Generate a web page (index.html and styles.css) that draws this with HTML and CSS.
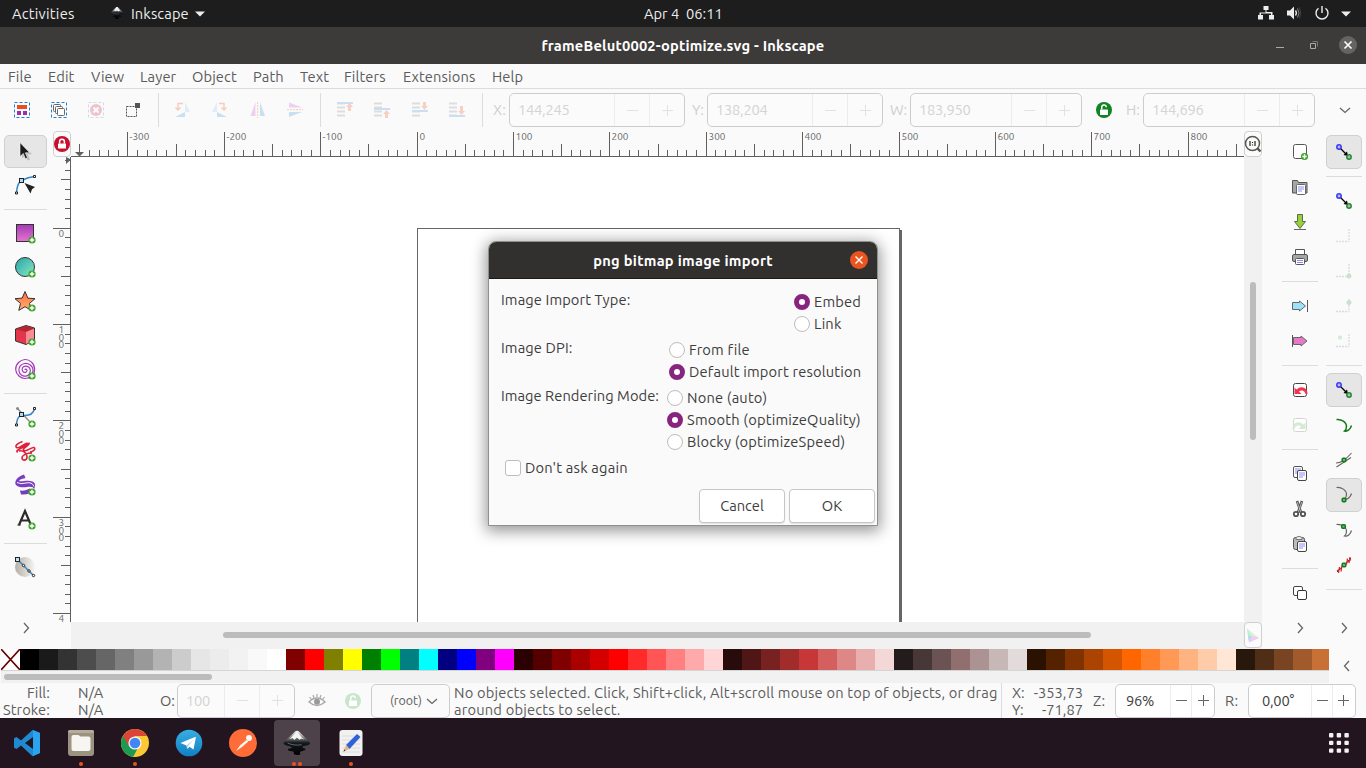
FILE: index.html
```html
<!DOCTYPE html>
<html lang="en">
<head>
<meta charset="utf-8">
<title>frameBelut0002-optimize.svg - Inkscape</title>
<link rel="stylesheet" href="styles.css">
</head>
<body>
<svg class="defs" aria-hidden="true">
  <defs>
    <linearGradient id="gPurple" x2="0" y2="1"><stop offset="0" stop-color="#a33bb4"/><stop offset="1" stop-color="#e573cf"/></linearGradient>
    <linearGradient id="gTeal" x2="1" y2="1"><stop offset="0" stop-color="#27a3a8"/><stop offset="1" stop-color="#8ce8c4"/></linearGradient>
    <linearGradient id="gOrange" x2="0" y2="1"><stop offset="0" stop-color="#ff6d3f"/><stop offset="1" stop-color="#ffb070"/></linearGradient>
    <linearGradient id="gGray" x2="1" y2="0"><stop offset="0" stop-color="#b5b0a6"/><stop offset="1" stop-color="#f6f5f3"/></linearGradient>
    <linearGradient id="gTele" x2="0" y2="1"><stop offset="0" stop-color="#37aee2"/><stop offset="1" stop-color="#1280c4"/></linearGradient>
    <linearGradient id="gInk" x2="0" y2="1"><stop offset="0" stop-color="#fff"/><stop offset=".3" stop-color="#777"/><stop offset=".5" stop-color="#15181c"/><stop offset="1" stop-color="#000"/></linearGradient>
    <g id="plus"><circle cx="17" cy="17" r="3.600" fill="#3fa52a"/><path d="M17 14.800v4.400M14.800 17h4.400" stroke="#fff" stroke-width="1.400"/></g>
    <g id="snap"><path d="M8 8l6 6" stroke="#000" stroke-width="1.200"/><path d="M16 16l-4.500-1 3.500-3.500z" fill="#000"/><circle cx="7" cy="7" r="2.200" fill="#b9b9f8" stroke="#3a3af0" stroke-width="1.500"/><circle cx="17" cy="17" r="2.200" fill="#9cc8a5" stroke="#2a8438" stroke-width="1.500"/></g>
    <g id="dot"><rect x="-1.800" y="-1.800" width="3.600" height="3.600" rx="1" fill="#6fb46f" stroke="#147a1c" stroke-width="1.500"/></g>
    <g id="corner"><path d="M17 5v12.500M4 17.500h13" stroke-dasharray="2 1" stroke-width="1.400" fill="none"/></g>
    <g id="ink"><path d="M12 1.500c-1.500 0-2 1-3 2L1.500 10.500c-2.200 2.300-.5 3.500 3 4 2 .4 3.500.8 3 1.600-.6.8-3.500.5-3.300 1.600.2 1 3.300 1.200 4.800 1.800 1 .5-.6 1.400.6 2.200 1.500 1 4.800.9 5.200-.3.3-1-.8-1.300 0-2 1.200-.7 4-.6 4.500-1.800.4-1.200-2.500-1.200-2.600-2.200 0-1 1.800-.8 3.800-1.300 2.600-.6 3.400-1.800 1.800-3.600L15 3.500c-1-1-1.500-2-3-2z" fill="url(#gInk)"/><path d="M12 2.300L8 6.300l-2.500 2.500 2.700-1.100 1.500 1.800 2.200-2.200 2.300 2 1.500-1.200 2.500.8L16 7z" fill="#f4f4f4"/><path d="M4 12q5 2.500 12 1.500" fill="none" stroke="#68788a" stroke-width=".7"/></g>
    <g id="lockOpen"><rect x="8" y="11.500" width="8" height="5.500" rx=".6" fill="#fff"/><path d="M9.700 11.500V9.500a2.300 2.300 0 014.600-.3" fill="none" stroke="#fff" stroke-width="1.500"/></g>
    <g id="lines"><path d="M4 5.500h8M4 9.500h8M4 13.500h8M4 17.500h8" stroke="#ddd" stroke-width="2"/></g>
  </defs>
</svg>

<header class="topbar">
  <span class="activities">Activities</span>
  <svg class="app-ico" viewBox="0 0 24 24"><use href="#ink"/></svg>
  <span class="app-name">Inkscape</span>
  <svg class="tri" viewBox="0 0 10 6"><path d="M0 .500h10L5 5.500z" fill="#eee"/></svg>
  <span class="clock">Apr 4&nbsp; 06:11</span>
  <div class="tray">
    <svg class="i16" viewBox="0 0 16 16"><path d="M5.500 1h5v4h-2v2h6V10H16v4.500h-5V10h2V8.500H3V10h2v4.500H0V10h1.500V7.500h6V5h-2z" fill="#eee"/></svg>
    <svg class="i16" viewBox="0 0 16 16"><path d="M1 5.500h3l4-4v13l-4-4H1z" fill="#eee"/><path d="M9.500 5.500q1.800 2.500 0 5" stroke="#eee" fill="none" stroke-width="1.300"/><path d="M11.500 3.500q3 4.500 0 9" stroke="#888" fill="none"/><path d="M13.300 2.300q3 5.700 0 11.400" stroke="#444" fill="none"/></svg>
    <svg class="i16" viewBox="0 0 16 16"><path d="M4.500 3.200a6 6 0 107 0M8 1v7" fill="none" stroke="#eee" stroke-width="1.400"/></svg>
    <svg class="tri" viewBox="0 0 10 6"><path d="M0 .500h10L5 5.500z" fill="#eee"/></svg>
  </div>
</header>

<div class="titlebar">
  <h1>frameBelut0002-optimize.svg - Inkscape</h1>
  <div class="winbtns">
    <svg viewBox="0 0 18 18"><path d="M5 11.500h8" stroke="#aaa"/></svg>
    <svg viewBox="0 0 18 18"><path d="M5.500 7.500h5v5h-5z" fill="none" stroke="#aaa"/><path d="M7.500 5.500h5v5" fill="none" stroke="#777"/></svg>
    <svg viewBox="0 0 18 18"><circle cx="9" cy="9" r="9" fill="#666462"/><path d="M5.500 5.500l7 7m0-7l-7 7" stroke="#fff" stroke-width="1.600"/></svg>
  </div>
</div>

<nav class="menubar"><span>File</span><span>Edit</span><span>View</span><span>Layer</span><span>Object</span><span>Path</span><span>Text</span><span>Filters</span><span>Extensions</span><span>Help</span></nav>

<div class="toolbar">
  <div class="tgroup g1">
    <svg class="i24" viewBox="0 0 24 24"><rect x="4.500" y="4.500" width="15" height="15" fill="none" stroke="#1d7fd6" stroke-dasharray="3 2"/><path d="M7 7h10v4H7z" fill="#e84f1c"/><path d="M7 13h4v4H7zM13 13h4v4h-4z" fill="#9c2fae"/></svg>
    <svg class="i24" viewBox="0 0 24 24"><rect x="4.500" y="4.500" width="15" height="15" fill="none" stroke="#1d7fd6" stroke-dasharray="3 2"/><g fill="#fff" stroke="#666"><rect x="6.500" y="6.500" width="7" height="7" rx="1"/><rect x="8.500" y="8.500" width="7" height="7" rx="1"/><rect x="10.500" y="10.500" width="7" height="7" rx="1"/></g></svg>
    <svg class="i24" viewBox="0 0 24 24"><rect x="4.500" y="4.500" width="15" height="15" fill="none" stroke="#c7dff2" stroke-dasharray="3 2"/><circle cx="12" cy="12" r="6" fill="#f0c3ca"/><path d="M9.500 9.500l5 5m0-5l-5 5" stroke="#fff" stroke-width="1.800"/></svg>
    <svg class="i24" viewBox="0 0 24 24"><rect x="5.500" y="8.500" width="10" height="10" fill="none" stroke="#555" stroke-dasharray="2 1"/><path d="M14 5h5v5h-5z" fill="#555"/></svg>
  </div>
  <div class="tgroup g2">
    <svg class="i24" viewBox="0 0 24 24"><path d="M14 4l5 10h-5z" fill="#deedf6"/><path d="M4 19l10-5v5z" fill="#c9dff2"/><path d="M12 5.500H7V12M4.500 9.500L7 12 9.500 9.500" fill="none" stroke="#f7cabf" stroke-width="1.400"/></svg>
    <svg class="i24" viewBox="0 0 24 24"><path d="M9 4L4 14h5z" fill="#deedf6"/><path d="M19 19L9 14v5z" fill="#c9dff2"/><path d="M11 5.500h5V12M13.500 9.500L16 12l2.500-2.500" fill="none" stroke="#f7cabf" stroke-width="1.400"/></svg>
    <svg class="i24" viewBox="0 0 24 24"><path d="M9.500 4v14h-5z" fill="#efcff0"/><path d="M14 4v14h5z" fill="#c9dff2"/><path d="M11.700 4v16" stroke="#f5c9be" stroke-dasharray="2 1"/></svg>
    <svg class="i24" viewBox="0 0 24 24"><path d="M6 9.500h13l-13-5z" fill="#efcff0"/><path d="M6 14v5l13-5z" fill="#c9dff2"/><path d="M4 11.700h16" stroke="#f5c9be" stroke-dasharray="2 1"/></svg>
  </div>
  <div class="tgroup g3">
    <svg class="i24" viewBox="0 0 24 24"><use href="#lines"/><path d="M4 5h16" stroke="#c9dff2" stroke-width="2"/><path d="M15 13V9h-2l3.500-4L20 9h-2v4z" fill="#f8cfc4"/></svg>
    <svg class="i24" viewBox="0 0 24 24"><use href="#lines"/><path d="M4 11h16" stroke="#c9dff2" stroke-width="2"/><path d="M15 20v-4h-2l3.500-4 3.500 4h-2v4z" fill="#f8cfc4"/></svg>
    <svg class="i24" viewBox="0 0 24 24"><use href="#lines"/><path d="M4 13h16" stroke="#c9dff2" stroke-width="2"/><path d="M15 4v4h-2l3.500 4L20 8h-2V4z" fill="#f8cfc4"/></svg>
    <svg class="i24" viewBox="0 0 24 24"><use href="#lines"/><path d="M4 18h16" stroke="#c9dff2" stroke-width="2"/><path d="M15 8v5h-2l3.500 4 3.500-4h-2V8z" fill="#f8cfc4"/></svg>
  </div>
  <span class="flabel fx">X:</span><div class="spin wide off"><span>144,245</span><i class="minus"></i><i class="plus"></i></div>
  <span class="flabel fy">Y:</span><div class="spin wide off"><span>138,204</span><i class="minus"></i><i class="plus"></i></div>
  <span class="flabel fw">W:</span><div class="spin mid off"><span>183,950</span><i class="minus"></i><i class="plus"></i></div>
  <svg class="i24 tlock" viewBox="0 0 24 24"><circle cx="12" cy="12" r="8" fill="#0f8420"/><use href="#lockOpen"/></svg>
  <span class="flabel fh">H:</span><div class="spin mid off"><span>144,696</span><i class="minus"></i><i class="plus"></i></div>
  <svg class="chev" viewBox="0 0 12 12"><path d="M1 4l5 4.500L11 4"/></svg>
</div>

<main class="work">
  <aside class="tools">
    <div class="tool on"><svg viewBox="0 0 24 24"><path d="M9 5v13l3.500-2.500 2 5 2.500-1-2.200-5 4.200-.5z" fill="#000" opacity=".18"/><path d="M7 2.500v14l3.300-3 2 5.200 2.200-.9-2.200-5h4.400z" fill="#1b1b1b" stroke="#fff" stroke-width=".6"/></svg></div>
    <div class="tool"><svg viewBox="0 0 24 24"><path d="M3.500 20C4 12 5.500 9 8.500 7.500S16 4 21.500 3.500" fill="none" stroke="#3584c4" stroke-width="1.500"/><path d="M11.500 10L22 14l-3 2.200-1.500 4.300z" fill="#222"/><rect x="6.500" y="5.500" width="4" height="4" fill="#a8dbf5" stroke="#222"/><path d="M20.500 2.500h2v2h-2zM2.500 19h2v2h-2z" fill="#fff" stroke="#222"/></svg></div>
    <hr>
    <div class="tool"><svg viewBox="0 0 24 24"><rect x="3.500" y="3.500" width="17" height="17" fill="url(#gPurple)" stroke="#333"/><use href="#plus" x="2" y="2"/></svg></div>
    <div class="tool"><svg viewBox="0 0 24 24"><circle cx="12" cy="12" r="9.500" fill="url(#gTeal)" stroke="#333"/><use href="#plus" x="2" y="2"/></svg></div>
    <div class="tool"><svg viewBox="0 0 24 24"><path d="M12 2.500l2.800 6.600 7.200.6-5.500 4.700 1.700 7-6.200-3.700-6.200 3.700 1.700-7L2 9.700l7.200-.6z" fill="url(#gOrange)" stroke="#333"/><use href="#plus" x="2" y="2"/></svg></div>
    <div class="tool"><svg viewBox="0 0 24 24"><path d="M2.500 6L13 2.500 21.500 5v12L13 21.500 2.500 18z" fill="#e2364c" stroke="#333"/><path d="M3 6.300L13 3l8 2.300L13 9z" fill="#b8242f"/><path d="M13 9l8-3.300V17l-8 4z" fill="#f98a96"/><use href="#plus" x="2" y="2"/></svg></div>
    <div class="tool"><svg viewBox="0 0 24 24"><path d="M12 13c0-1.500 2-1 2 .5s-2 2.500-3.500 1.500-2-4 0-5.200 5.500-.8 6.500 2-.5 6.700-4 7.300S6.500 17.500 6 14s1.500-7 5.500-7.500 8.500 2 8.500 7-4 8-8 8-9-3.500-9.300-9S7.500 2.700 12 2.500s9.500 4 9.600 9.500-3 8.500-6 9.500" fill="none" stroke="#a23ab8" stroke-width="1.200"/><use href="#plus" x="2" y="2"/></svg></div>
    <hr>
    <div class="tool"><svg viewBox="0 0 24 24"><path d="M4.500 3.500l12 13" stroke="#888" stroke-width="1.300"/><circle cx="4.500" cy="3.500" r="1.500" fill="#888"/><path d="M3.500 20C4 9 9 10.500 12 10.500s8-1 9.500-6.500" fill="none" stroke="#3584c4" stroke-width="1.500"/><rect x="6.500" y="7.500" width="4" height="4" fill="#a8dbf5" stroke="#222"/><path d="M20.500 2.500h2v2h-2zM2.500 19h2v2h-2z" fill="#fff" stroke="#222"/><use href="#plus" x="2" y="2"/></svg></div>
    <div class="tool"><svg viewBox="0 0 24 24"><path d="M9.500 2.500C5 4 1.500 6.500 3.500 8.500S10 5 14.500 4M5 13C1.500 12 7 10 10 8s7-5 6-3-8 5-5 6.500 8-4 10-3 0 4-4 4.500M6 12c4-1 8 2 8 6s-5 4-5 1 5-5 10-5" fill="none" stroke="#e01f3a" stroke-width="1.600"/><use href="#plus" x="2" y="2"/></svg></div>
    <div class="tool"><svg viewBox="0 0 24 24"><path d="M11 1.500l1.500 3.500C8 6 5.500 7 6.500 8s9-1.500 13 .5 2.500 5 1.500 8c0-2.500-3-3-7-2.500s-9 .5-11-2S3.500 3.500 11 1.500z" fill="#7a3fc0"/><path d="M7 17.500c4 .5 7-.5 10-2v4.800c-3 1.200-6 1.500-9 1.200z" fill="#7040b8"/><path d="M4 9.500q3 2 9 .5t8 3.500" fill="none" stroke="#fafafa"/><use href="#plus" x="2" y="2"/></svg></div>
    <div class="tool"><svg viewBox="0 0 24 24"><path d="M6 18L12 4l5.500 13M8 13.500h8" fill="none" stroke="#2b2b2b" stroke-width="2.200"/><path d="M4.500 18h3" stroke="#2b2b2b" stroke-width="1.200"/><use href="#plus" x="2" y="2"/></svg></div>
    <hr>
    <div class="tool"><svg viewBox="0 0 24 24"><circle cx="12" cy="12" r="10" fill="url(#gGray)"/><path d="M4.500 4.500L20 20" stroke="#3584c4" stroke-width="1.500"/><rect x="2.500" y="2.500" width="4" height="4" fill="#b9e4fa" stroke="#222"/><g fill="#fff" stroke="#222"><circle cx="10.500" cy="10.500" r="1.200"/><circle cx="16" cy="16" r="1.200"/><circle cx="20.500" cy="20.500" r="1.200"/></g></svg></div>
    <svg class="chev more" viewBox="0 0 12 12"><path d="M4 1l4.500 5L4 11"/></svg>
  </aside>

  <section class="canvas-grid">
    <div class="rbtn"><svg viewBox="0 0 18 18"><circle cx="9" cy="9" r="8" fill="#c8102e"/><rect x="5" y="8.500" width="8" height="5" rx=".6" fill="#fff"/><path d="M6.600 8.500V6.700a2.400 2.400 0 014.800 0v1.800" fill="none" stroke="#fff" stroke-width="1.500"/></svg></div>
    <svg class="hruler" id="hruler" width="1173" height="26"></svg>
    <div class="rbtn"><svg viewBox="0 0 18 18"><circle cx="8.500" cy="8.500" r="7" fill="#fbfbf8" stroke="#555752" stroke-width="1.500"/><path d="M13.500 13.500l3 3" stroke="#555" stroke-width="2.400"/><path d="M6 6v5M8.500 7v1M8.500 9.500v1M11 6v5" stroke="#222" stroke-width="1.200"/></svg></div>
    <svg class="vruler" id="vruler" width="18" height="465"></svg>
    <div class="canvas"><div class="page"></div></div>
    <div class="vscroll"><i></i></div>
    <div class="blank"></div>
    <div class="hscroll"><i></i></div>
    <div class="cms"><div class="rbtn"><svg viewBox="0 0 18 18"><path d="M3 2.500l12 9.500L5 16.500z" fill="#d9f0e2"/><path d="M3 2.500l5 8-3.500 3z" fill="#b9f3bd"/><path d="M4 10h4l-3 6.500z" fill="#b4d8fb"/><path d="M8 10l7 2L5 16.500z" fill="#f6c9ee"/></svg></div></div>
  </section>

  <aside class="cmds">
    <div class="cmd"><svg viewBox="0 0 24 24"><rect x="5.500" y="4.500" width="13" height="14" rx="2" fill="#fff" stroke="#555"/><use href="#plus" x="-.5" y="-.5"/></svg></div>
    <div class="cmd"><svg viewBox="0 0 24 24"><path d="M4.500 18V5.500h5l1 2h8.500V18z" fill="#a5a5a5" stroke="#555"/><rect x="8.500" y="9.500" width="9" height="10" rx="1" fill="#fff" stroke="#666"/><path d="M10 12h6M10 14h6M10 16h4" stroke="#8b8bf0"/></svg></div>
    <div class="cmd"><svg viewBox="0 0 24 24"><path d="M9.500 4.500h5v7h3L12 18.500l-5.500-7h3z" fill="#98cf3c" stroke="#5c6e45"/><path d="M6 19.500h12" stroke="#666"/></svg></div>
    <div class="cmd"><svg viewBox="0 0 24 24"><path d="M7.500 10V4.500h9V10" fill="#fff" stroke="#555"/><rect x="4.500" y="9.500" width="15" height="7" rx="1.500" fill="#a5a5a5" stroke="#555"/><rect x="7.500" y="13.500" width="9" height="6" rx="1" fill="#fff" stroke="#555"/><path d="M9 15.500h6M9 17.500h6" stroke="#8b8bf0"/></svg></div>
    <hr>
    <div class="cmd"><svg viewBox="0 0 24 24"><path d="M4.500 8.500h7V7l6 5-6 5v-1.500h-7z" fill="#9de2fa" stroke="#666"/><path d="M19.500 6v12" stroke="#555"/></svg></div>
    <div class="cmd"><svg viewBox="0 0 24 24"><path d="M5.500 8.500H13V7l6 5-6 5v-1.500H5.500z" fill="#e679c8" stroke="#666"/><path d="M4.500 6v12" stroke="#555"/></svg></div>
    <hr>
    <div class="cmd"><svg viewBox="0 0 24 24"><rect x="5.500" y="5.500" width="13" height="13" rx="2" fill="#fff" stroke="#444"/><path d="M6.500 16V9.500l2 2q4-3.500 8-1.500 3 1.800 3 6h-2q-.5-3-3-3.500-2-.3-3.500 1l2.500 2.500z" fill="#f33450"/></svg></div>
    <div class="cmd"><svg viewBox="0 0 24 24"><rect x="5.500" y="5.500" width="13" height="13" rx="2" fill="#fff" stroke="#d5d5d5"/><path d="M17.500 16V9.500l-2 2q-4-3.500-8-1.500-3 1.800-3 6h2q.5-3 3-3.500 2-.3 3.500 1L10.500 16z" fill="#d3ecd0"/></svg></div>
    <hr>
    <div class="cmd"><svg viewBox="0 0 24 24"><rect x="5.500" y="4.500" width="9" height="11" rx="1.500" fill="#fff" stroke="#555"/><path d="M7 7h6M7 9h3M7 11h3" stroke="#8b8bf0"/><rect x="9.500" y="8.500" width="9" height="10" rx="1.500" fill="#fff" stroke="#444"/><path d="M11 11h6M11 13h6M11 15h4" stroke="#8b8bf0"/></svg></div>
    <div class="cmd"><svg viewBox="0 0 24 24"><path d="M9 4l4 11.500M14 4l-4 11.500" stroke="#555" stroke-width="2.600"/><path d="M9.200 5l3.500 10M13.800 5l-3.500 10" stroke="#ccc8c0" stroke-width=".8"/><circle cx="8" cy="17" r="2.200" fill="#fff" stroke="#555" stroke-width="1.800"/><circle cx="15" cy="17" r="2.200" fill="#fff" stroke="#555" stroke-width="1.800"/></svg></div>
    <div class="cmd"><svg viewBox="0 0 24 24"><rect x="5.500" y="5.500" width="11" height="12" rx="2" fill="#bbb" stroke="#555"/><path d="M8 5.500q3-2.500 6 0v2H8z" fill="#eee" stroke="#777"/><rect x="9.500" y="9.500" width="9" height="10" rx="1.500" fill="#fff" stroke="#444"/><path d="M11 12h6M11 14h6M11 16h4" stroke="#8b8bf0"/></svg></div>
    <hr>
    <div class="cmd"><svg viewBox="0 0 24 24"><rect x="5.500" y="5.500" width="9" height="9" rx="1.500" fill="#fff" stroke="#444"/><rect x="9.500" y="9.500" width="9" height="9" rx="1.500" fill="#fff" stroke="#333"/></svg></div>
    <svg class="chev more" viewBox="0 0 12 12"><path d="M4 1l4.500 5L4 11"/></svg>
  </aside>

  <aside class="cmds snaps">
    <div class="cmd on"><svg viewBox="0 0 24 24"><use href="#snap"/></svg></div>
    <hr>
    <div class="cmd"><svg viewBox="0 0 24 24"><use href="#snap"/></svg></div>
    <div class="cmd"><svg viewBox="0 0 24 24" stroke="#d6e6d6"><use href="#corner"/></svg></div>
    <div class="cmd"><svg viewBox="0 0 24 24" stroke="#dcdcdc"><use href="#corner"/><circle cx="17" cy="17" r="2" fill="#cfe3d3" stroke="#c5ddc8"/></svg></div>
    <div class="cmd"><svg viewBox="0 0 24 24" stroke="#dcdcdc"><use href="#corner"/><circle cx="17" cy="8.500" r="2" fill="#cfe3d3" stroke="#c5ddc8"/></svg></div>
    <div class="cmd"><svg viewBox="0 0 24 24" stroke="#dcdcdc"><use href="#corner"/><circle cx="8" cy="8.500" r="1.500" fill="#e3f0e3" stroke="#c8e2c8"/></svg></div>
    <hr>
    <div class="cmd on"><svg viewBox="0 0 24 24"><use href="#snap"/></svg></div>
    <div class="cmd"><svg viewBox="0 0 24 24"><path d="M4.500 6.500c5-.5 10 2.500 10 7 0 2-.5 3.500-2 4.500 3 1 6-2 7-5.500" fill="none" stroke="#147a1c" stroke-width="1.500"/></svg></div>
    <div class="cmd"><svg viewBox="0 0 24 24"><path d="M4 15c6 0 10-4 15.500-10M4.500 19L19 9.500" fill="none" stroke="#666" stroke-width="1.100"/><use href="#dot" x="12" y="12"/></svg></div>
    <div class="cmd on"><svg viewBox="0 0 24 24"><path d="M4.500 4.500c5-.5 10 2.500 10 7 0 2-.5 3.500-2 4.500 3 1 6-2 7-5.500" fill="none" stroke="#666" stroke-width="1.200"/><use href="#dot" x="12" y="17"/></svg></div>
    <div class="cmd"><svg viewBox="0 0 24 24"><path d="M4.500 6.500c5-.5 10 2.500 10 7 0 2-.5 3.500-2 4.500 3 1 6-2 7-5.500" fill="none" stroke="#666" stroke-width="1.200"/><use href="#dot" x="11.500" y="8.500"/></svg></div>
    <div class="cmd"><svg viewBox="0 0 24 24"><path d="M5 19L19 5" stroke="#333"/><path d="M6.500 20l1-6M9 18.500l1-6M14.500 11.500l1-6M17 10l1-6M5 18l5-3.500M14 10l5-3.500" stroke="#cf2a35" stroke-width="1.300"/><use href="#dot" x="12" y="12"/></svg></div>
    <hr>
    <svg class="chev more" viewBox="0 0 12 12"><path d="M4 1l4.500 5L4 11"/></svg>
  </aside>
</main>

<div class="palette">
  <div class="swwrap"><div class="swatches" id="swatches"><svg class="none" viewBox="0 0 19 21"><path d="M0 0h19v21H0z" fill="#fff"/><path d="M0 0l19 21M19 0L0 21" stroke="#6b0000" stroke-width="1.600"/></svg></div><div class="pscroll"><i></i></div></div>
  <svg class="chev pal" viewBox="0 0 12 12"><path d="M8 1L3.500 6 8 11"/></svg>
</div>

<footer class="status">
  <div class="fs"><span>Fill:</span><span>Stroke:</span></div>
  <div class="na"><span>N/A</span><span>N/A</span></div>
  <span class="flabel so">O:</span><div class="spin op off"><span>100</span><i class="minus"></i><i class="plus"></i></div>
  <svg class="i24 eye" viewBox="0 0 24 24"><path d="M4 13q8-8 16 0-8 7-16 0z" fill="none" stroke="#aaa" stroke-width="1.500"/><circle cx="12" cy="12.800" r="3" fill="#999"/><path d="M12 5v3M8 6l1 3M16 6l-1 3M4.500 8l2 2.500M19.500 8l-2 2.500" stroke="#aaa" stroke-width="1.200"/></svg>
  <svg class="i24 slock" viewBox="0 0 24 24"><circle cx="12" cy="12" r="8" fill="#cbe5cd"/><use href="#lockOpen"/></svg>
  <div class="root"><span>(root)</span><svg class="chev" viewBox="0 0 12 12"><path d="M1 4l5 4.500L11 4"/></svg></div>
  <div class="msg"><span>No objects selected. Click, Shift+click, Alt+scroll mouse on top of objects, or drag</span><span>around objects to select.</span></div>
  <div class="xy"><span>X:</span><b>-353,73</b><span>Y:</span><b>-71,87</b></div>
  <span class="flabel sz">Z:</span><div class="spin zoom"><span>96%</span><i class="minus"></i><i class="plus"></i></div>
  <span class="flabel sr">R:</span><div class="spin rot"><span>0,00°</span><i class="minus"></i><i class="plus"></i></div>
</footer>

<div class="dock">
  <div class="app"><svg viewBox="0 0 28 28"><path d="M19.500 1L27 4v20l-7.500 3.200L8 16.500 3.500 20 1 18.700V9.300L3.500 8 8 11.500zM20 8l-8 6 8 6z" fill="#1f8ad2" fill-rule="evenodd"/><path d="M20 1l7 3v20l-7 3z" fill="#2aa4ee"/></svg></div>
  <div class="app"><svg viewBox="0 0 28 28"><rect x="1" y="1" width="26" height="26" rx="3" fill="#9b9280"/><rect x="1" y="1" width="26" height="3" rx="1.500" fill="#b5ad9c"/><path d="M4.500 8q0-2 2-2h5l2 1.500h8q2 0 2 2V20q0 2-2 2h-15q-2 0-2-2z" fill="#f6f5f2"/></svg><i class="dots"><b></b></i></div>
  <div class="app"><svg viewBox="0 0 28 28"><circle cx="14" cy="14" r="14" fill="#fcc934"/><path d="M14 14L1.900 7A14 14 0 0013 28l5-9z" fill="#1b9a52"/><path d="M14 7h12.100A14 14 0 001.900 7l6 10z" fill="#dc4437"/><path d="M20 17.500L14 28a14 14 0 01-2-.1l5-9z" fill="#fcc934"/><circle cx="14" cy="14" r="6.600" fill="#f4f4f4"/><circle cx="14" cy="14" r="5.300" fill="#4285f4"/></svg><i class="dots"><b></b></i></div>
  <div class="app"><svg viewBox="0 0 28 28"><circle cx="14" cy="14" r="13.300" fill="url(#gTele)"/><path d="M5.500 14L20 8q1-.3.800.8L18.500 20.500l-4-2.700L12.300 20 11.500 16.500z" fill="#fff"/><path d="M11.500 16.500L18 11l-5 6-.7 3z" fill="#a9cfe8"/></svg></div>
  <div class="app"><svg viewBox="0 0 28 28"><circle cx="14" cy="14" r="14" fill="#ff6c37"/><path d="M7 22l4-5.500 6-6 2.200 2L13 18z" fill="#fff"/><circle cx="20" cy="9" r="2.900" fill="#fff"/><path d="M12 15l6-4.500" stroke="#ff6c37" stroke-width=".8"/></svg></div>
  <div class="app on"><svg viewBox="0 0 24 24"><use href="#ink"/></svg><i class="dots"><b></b><b></b></i></div>
  <div class="app"><svg viewBox="0 0 28 28"><rect x="2.500" y="1" width="23" height="26" rx="3" fill="#f1f1f0"/><path d="M5 7h18M5 11h18M5 15h18M5 19h18M5 23h18" stroke="#ddd"/><path d="M9 16L20 5l3.500 3L12.500 20z" fill="#2f62d8"/><path d="M9 16l3.500 4L6.500 22.500z" fill="#e9b384"/><path d="M6.500 22.500l.8-2.200 1.200 1.500z" fill="#333"/></svg><i class="dots"><b></b></i></div>
  <svg class="apps" viewBox="0 0 20 20"><g fill="#f2f2f2"><rect width="4.400" height="4.400" rx="1"/><rect x="7.700" width="4.400" height="4.400" rx="1"/><rect x="15.400" width="4.400" height="4.400" rx="1"/><rect y="7.700" width="4.400" height="4.400" rx="1"/><rect x="7.700" y="7.700" width="4.400" height="4.400" rx="1"/><rect x="15.400" y="7.700" width="4.400" height="4.400" rx="1"/><rect y="15.400" width="4.400" height="4.400" rx="1"/><rect x="7.700" y="15.400" width="4.400" height="4.400" rx="1"/><rect x="15.400" y="15.400" width="4.400" height="4.400" rx="1"/></g></svg>
</div>

<div class="dialog" role="dialog">
  <div class="dhead"><h2>png bitmap image import</h2><svg viewBox="0 0 18 18"><circle cx="9" cy="9" r="9" fill="#e95420"/><path d="M5.500 5.500l7 7m0-7l-7 7" stroke="#fff" stroke-width="1.400"/></svg></div>
  <div class="dbody">
    <div class="row r1"><span class="lab">Image Import Type:</span><div class="opts"><label><i class="sel"></i>Embed</label><label><i></i>Link</label></div></div>
    <div class="row r2"><span class="lab">Image DPI:</span><div class="opts"><label><i></i>From file</label><label><i class="sel"></i>Default import resolution</label></div></div>
    <div class="row r3"><span class="lab">Image Rendering Mode:</span><div class="opts"><label><i></i>None (auto)</label><label><i class="sel"></i>Smooth (optimizeQuality)</label><label><i></i>Blocky (optimizeSpeed)</label></div></div>
    <label class="ask"><i></i>Don't ask again</label>
    <div class="btns"><button>Cancel</button><button>OK</button></div>
  </div>
</div>
<script src="app.js"></script>
</body>
</html>
```
FILE: styles.css
```css
* { box-sizing: border-box; }
body { margin: 0; width: 1366px; height: 768px; overflow: hidden; position: relative; background: #fafafa; color: #5c5c5c; font: 14.667px/16px "Ubuntu", "Noto Sans", sans-serif; letter-spacing: .12px; }
svg { display: block; flex: none; }
.defs { position: absolute; width: 0; height: 0; }
hr { border: 0; margin: 7px 0 6px; height: 1px; background: #dcdcdc; }
.i24 { width: 24px; height: 24px; }
.i16 { width: 16px; height: 16px; }
.chev { width: 12px; height: 12px; fill: none; stroke: #666; stroke-width: 1.3; }

.topbar { height: 27px; background: #1d1d1d; color: #eee; display: flex; align-items: center; position: relative; }
.activities { width: 98px; padding-left: 12px; letter-spacing: .25px; }
.app-ico { width: 14px; height: 14px; margin: 0 7px 2px 12px; }
.app-name { width: 64px; }
.tri { width: 10px; height: 6px; }
.clock { position: absolute; left: 644px; letter-spacing: 0; }
.tray { display: flex; align-items: center; gap: 12px; margin-left: auto; padding-right: 15px; }
.tray .tri { margin-left: -1px; }
.tray .i16 { margin-bottom: 1px; }
.titlebar { height: 37px; background: #3d3b39; color: #fff; display: grid; grid-template-columns: 1fr auto 1fr; align-items: center; }
.titlebar h1 { grid-column: 2; margin: 0; font-size: 14.667px; line-height: 18px; font-weight: 700; letter-spacing: .2px; }
.winbtns { display: flex; gap: 16px; justify-content: flex-end; padding-right: 9px; margin-top: -1px; }
.winbtns svg { width: 18px; height: 18px; }
.menubar { height: 25px; border-bottom: 1px solid #dcdcdc; padding-left: 8px; display: grid; grid-template-columns: 40px 43px 49px 52px 61px 47px 44px 59px 89px 60px; align-items: center; line-height: 24px; padding-top: 1px; }

.toolbar { height: 42px; display: flex; align-items: center; }
.tgroup { display: flex; gap: 13.3px; height: 34px; align-items: center; border-right: 1px solid #dcdcdc; }
.g1 { padding-left: 10px; width: 159px; gap: 13px; }
.g2 { padding-left: 12px; width: 162px; }
.g3 { padding-left: 12px; width: 162px; }
.flabel { flex: none; }
.toolbar .flabel { color: #cfcfcf; }
.fx { width: 26px; padding-left: 10px; }
.fy { width: 22px; padding-left: 7px; }
.fw { width: 27px; padding-left: 7px; }
.tlock { margin-left: 10px; }
.fh { width: 27px; padding-left: 10px; }
.toolbar > .chev { margin-left: 24px; }
.spin { flex: none; height: 34px; border: 1px solid #cdcdcd; border-radius: 5px; display: flex; background: #fff; color: #3d3d3d; letter-spacing: -.25px; }
.spin span { flex: 1; padding-left: 8px; line-height: 32px; }
.spin i { width: 35px; border-left: 1px solid #ececec; background: linear-gradient(#666, #666) center / 11px 1px no-repeat; }
.spin i.plus { background: linear-gradient(#666, #666) center / 11px 1px no-repeat, linear-gradient(#666, #666) center / 1px 11px no-repeat; }
.spin.off { color: #d3d3d3; background: #fbfbfb; }
.spin.off i { background-image: linear-gradient(#e2e2e2, #e2e2e2); }
.spin.off i.plus { background-image: linear-gradient(#e2e2e2, #e2e2e2), linear-gradient(#e2e2e2, #e2e2e2); }
.wide { width: 176px; }
.mid { width: 172px; }

.work { height: 518px; display: flex; }
.tools { width: 53px; padding: 3px 6px 0 4px; }
.tool { height: 34px; display: grid; place-items: center; border: 1px solid transparent; border-radius: 5px; }
.tool svg { width: 24px; height: 24px; margin-right: 1px; }
.tool.on { height: 33px; margin: 1px 0 0; background: #e6e6e6; border-color: #d0d0d0; }
.more { margin: 0 auto; }
.tools .more { margin-top: 38px; }
.canvas-grid { width: 1209px; display: grid; grid-template: 26px 465px 27px / 18px 1173px 18px; }
.rbtn { width: 18px; height: 26px; border: 1px solid #cfcfcf; border-radius: 4px; background: #fbfbfb; display: grid; place-content: center; }
.rbtn svg { width: 18px; height: 18px; }
.canvas { background: #fff; overflow: hidden; }
.page { width: 483px; height: 600px; margin: 71px 0 0 346px; border: 1px solid #666; box-shadow: 2px 2px 0 #666; }
.vscroll { background: #f1f1f1; }
.vscroll i { display: block; width: 6px; height: 158px; border-radius: 3px; background: #bcbcbc; margin: 125px 0 0 6px; }
.hscroll { background: #f1f1f1; }
.hscroll i { display: block; width: 868px; height: 6px; border-radius: 3px; background: #bcbcbc; margin: 10px 0 0 152px; }
.cms { background: #f1f1f1; }
.ticks { stroke: #5f5f5f; fill: none; }
.marks { font-size: 10px; fill: #666; letter-spacing: 0; }
.markarrow { fill: #5f5f5f; }
.cmds { width: 36px; margin-left: 20px; padding-top: 3px; }
.snaps { margin-left: 8px; display: flex; flex-direction: column; }
.cmd { flex: none; height: 35px; display: grid; place-items: center; border-radius: 5px; border: 1px solid transparent; }
.cmd svg { width: 24px; height: 24px; }
.cmd.on { height: 34px; margin-top: 1px; background: #e6e6e6; border-color: #d0d0d0; }
.cmds .more { margin-top: 12px; }
.snaps hr { width: 36px; flex: none; }
.snaps .more { margin-top: 26px; }

.palette { height: 34px; display: flex; align-items: center; }
.swwrap { width: 1328px; margin-left: 1px; overflow: hidden; }
.swatches { display: flex; height: 21px; }
.swatches i, .none { flex: none; width: 19px; height: 21px; }
.pscroll { height: 13px; background: #f1f1f1; border-top: 1px solid #d5d5d5; padding: 3px 0 0 3px; }
.pscroll i { display: block; width: 208px; height: 6px; border-radius: 3px; background: #bcbcbc; }
.pal { margin-left: 12px; }

.status { height: 35px; display: flex; align-items: center; line-height: 17px; }
.fs, .na, .msg { display: flex; flex-direction: column; padding-top: 1px; height: 35px; }
.fs { width: 50px; align-items: flex-end; letter-spacing: .1px; }
.na { width: 110px; padding-left: 28px; letter-spacing: .3px; }
.so { width: 17px; letter-spacing: 0; }
.op { width: 118px; }
.eye { margin-left: 10px; }
.slock { margin-left: 12px; }
.root { width: 79px; height: 34px; margin-left: 6px; border: 1px solid #cdcdcd; border-radius: 5px; display: flex; align-items: center; gap: 4px; padding-left: 18px; font-size: 12.500px; letter-spacing: -.05px; }
.msg { width: 552px; padding-left: 4px; border-right: 1px solid #dcdcdc; white-space: nowrap; letter-spacing: .19px; }
.xy { width: 82px; height: 35px; padding: 1px 0 0 10px; display: grid; grid-template-columns: 20px 51px; letter-spacing: 0; }
.xy b { font-weight: 400; text-align: right; }
.sz { width: 31px; padding-left: 9px; }
.sr { width: 33px; padding-left: 10px; }
.zoom { width: 100px; }
.rot { width: 108px; }
.zoom i, .rot i { width: 21px; }
.zoom i.plus { width: 23px; }
.rot i.plus { width: 23px; background-position: 5px center, 10px center; }
.zoom span { padding-left: 10px; }
.rot span { padding-left: 13px; }

.dock { height: 50px; background: #23151f; display: flex; align-items: center; padding-left: 4px; gap: 8px; }
.app { width: 46px; height: 46px; border-radius: 4px; position: relative; display: grid; place-items: center; }
.app.on { background: #4d424a; }
.app svg { width: 28px; height: 28px; }
.dots { position: absolute; left: 0; right: 0; bottom: 0; display: flex; justify-content: center; gap: 2px; }
.dots b { width: 4px; height: 4px; border-radius: 2px; background: #e95420; }
.apps { width: 20px; height: 20px; margin: 0 17px 0 auto; }

.dialog { position: absolute; left: 488px; top: 241px; width: 390px; height: 285px; background: #fafafa; color: #3d3d3d; border: 1px solid #8f8f8c; border-radius: 8px 8px 0 0; box-shadow: 0 3px 15px 2px rgba(0, 0, 0, .42); }
.dhead { height: 37px; background: #322f2f; border-bottom: 1px solid #1b1919; border-radius: 7px 7px 0 0; color: #fff; display: grid; grid-template-columns: 1fr auto 1fr; align-items: center; }
.dhead h2 { grid-column: 2; margin: 2px 0 0; font-size: 14.667px; font-weight: 700; letter-spacing: .27px; }
.dhead svg { width: 18px; height: 18px; justify-self: end; margin-right: 9px; }
.dbody { padding: 12px 2px 0 12px; }
.row { display: flex; justify-content: space-between; }
.lab { padding-top: 1px; white-space: nowrap; }
.r3 .lab { letter-spacing: .05px; }
.opts { padding-bottom: 4px; }
.r1 .opts { width: 81px; }
.r2 .opts { width: 206px; }
.r3 .opts { width: 208px; }
label { display: flex; align-items: center; height: 22px; gap: 4px; white-space: nowrap; letter-spacing: .17px; }
.r3 label { letter-spacing: .2px; }
label i { width: 16px; height: 16px; border: 1px solid #bdbdbd; border-radius: 8px; background: #fff; }
label i.sel { border: 5.500px solid #85257f; }
.ask { padding-left: 4px; letter-spacing: .2px; }
.ask i { border-radius: 3px; }
.btns { display: flex; justify-content: flex-end; gap: 4px; margin-top: 10px; }
.btns button { width: 86px; height: 34px; padding: 0; font: inherit; color: #3d3d3d; background: #fff; border: 1px solid #c6c6c6; border-radius: 4px; box-shadow: 0 1px 1px rgba(0, 0, 0, .1); }
```
FILE: app.js
```js
// Rulers: one label every 100 user units, a tick every 10.
const STEP = 9.638;
function tickLen(n) { return n % 10 === 0 ? 25 : n % 5 === 0 ? 13 : 7; }

let d = 'M0 25.5H1173', labels = '';
for (let n = -34; n <= 85; n++) {
  const x = Math.floor(417.13 + n * STEP) - 71 + 0.5;
  if (x > 1173) break;
  d += `M${x} 26v-${tickLen(n)}`;
  if (n % 10 === 0) labels += `<text x="${x + 2}" y="9">${n * 10}</text>`;
}
document.getElementById('hruler').innerHTML =
  `<path class="ticks" d="${d}"/><g class="marks">${labels}</g><path class="markarrow" d="M8 13h1v8h4l-4.500 4.500L4 21h4z"/>`;

d = 'M17.500 0V465'; labels = '';
for (let n = -7; n <= 40; n++) {
  const y = Math.floor(228.1 + n * STEP) - 157 + 0.5;
  const len = n % 10 === 0 ? 18 : n % 5 === 0 ? 10 : 6;
  d += `M18 ${y}h-${len}`;
  if (n % 10 === 0) [...String(n * 10)].forEach((c, i) => {
    const base = y + 8.5 + i * 7.5;
    if (base < 466) labels += `<text x="5.500" y="${base}">${c}</text>`;
  });
}
document.getElementById('vruler').innerHTML =
  `<path class="ticks" d="${d}"/><g class="marks">${labels}</g><path class="markarrow" d="M13 0l5 2.500-5 4.500z"/>`;

const COLORS = ('000 1a1a1a 333 4d4d4d 666 808080 999 b3b3b3 ccc e6e6e6 ececec f2f2f2 f9f9f9 fff ' +
  '800000 f00 808000 ff0 008000 0f0 008080 0ff 000080 00f 800080 f0f ' +
  '2b0000 550000 800000 a00 d40000 f00 ff2a2a f55 ff8080 faa ffd5d5 ' +
  '280b0b 501616 782121 a02c2c c83737 d35f5f de8787 e9afaf f4d7d7 ' +
  '241c1c 483737 6c5353 916f6f ac9393 c8b7b7 e3dbdb ' +
  '2b1100 520 803300 a40 d45500 f60 ff7f2a f95 ffb380 fca ffe6d5 ' +
  '28170b 502d16 784421 a05a2c c87137').split(' ');
const sw = document.getElementById('swatches');
for (const c of COLORS) {
  const i = document.createElement('i');
  i.style.background = '#' + c;
  sw.append(i);
}
```
